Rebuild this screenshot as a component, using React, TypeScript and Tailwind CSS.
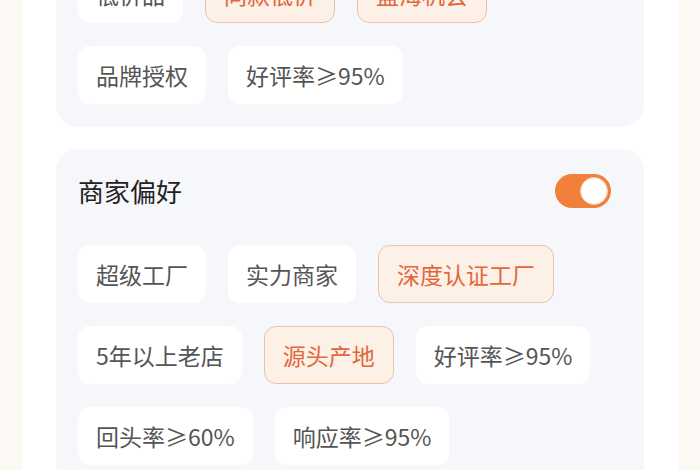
import React from "react";

type Chip = { label: string; active?: boolean };

const font = { fontFamily: '"Noto Sans CJK SC", "Noto Sans", sans-serif' };

function Tag({ label, active }: Chip) {
  return (
    <div
      className={
        active
          ? "h-[58px] px-[18px] flex items-center rounded-[12px] border border-[#e9c3a8] bg-[#fdf0e6] text-[#e0683a] text-[23px]"
          : "h-[58px] px-[18px] flex items-center rounded-[12px] bg-white text-[#555555] text-[23px]"
      }
    >
      {label}
    </div>
  );
}

function TagRows({ rows }: { rows: Chip[][] }) {
  return (
    <div className="flex flex-col gap-[23px]">
      {rows.map((row, i) => (
        <div key={i} className="flex gap-[22px]">
          {row.map((c) => (
            <Tag key={c.label} {...c} />
          ))}
        </div>
      ))}
    </div>
  );
}

function Toggle({ on }: { on: boolean }) {
  return (
    <div
      className={
        "w-[56px] h-[34px] rounded-full p-[3px] flex items-center " +
        (on ? "bg-[#f0803a] justify-end" : "bg-gray-300 justify-start")
      }
    >
      <div className="w-[28px] h-[28px] rounded-full bg-white border border-[#f6c9a8]" />
    </div>
  );
}

export default function App() {
  return (
    <div className="w-[700px] h-[470px] overflow-hidden bg-[#fcf9f5] flex justify-center" style={font}>
      <div className="w-[656px] bg-white px-[34px] flex flex-col gap-[22px]">
        {/* Product preference (scrolled) */}
        <div className="-mt-[57px] rounded-[22px] bg-[#f5f7fa] pt-[22px] pb-[23px] px-[22px]">
          <TagRows
            rows={[
              [{ label: "低价品" }, { label: "同款低价", active: true }, { label: "蓝海机会", active: true }],
              [{ label: "品牌授权" }, { label: "好评率≥95%" }],
            ]}
          />
        </div>

        {/* Merchant preference */}
        <div className="rounded-[22px] bg-[#f5f7fa] pt-[22px] pb-[23px] px-[22px]">
          <div className="flex items-center justify-between mb-[35px] pr-[11px]">
            <span className="text-[26px] text-[#222222]">商家偏好</span>
            <Toggle on />
          </div>
          <TagRows
            rows={[
              [{ label: "超级工厂" }, { label: "实力商家" }, { label: "深度认证工厂", active: true }],
              [{ label: "5年以上老店" }, { label: "源头产地", active: true }, { label: "好评率≥95%" }],
              [{ label: "回头率≥60%" }, { label: "响应率≥95%" }],
            ]}
          />
        </div>
      </div>
    </div>
  );
}
